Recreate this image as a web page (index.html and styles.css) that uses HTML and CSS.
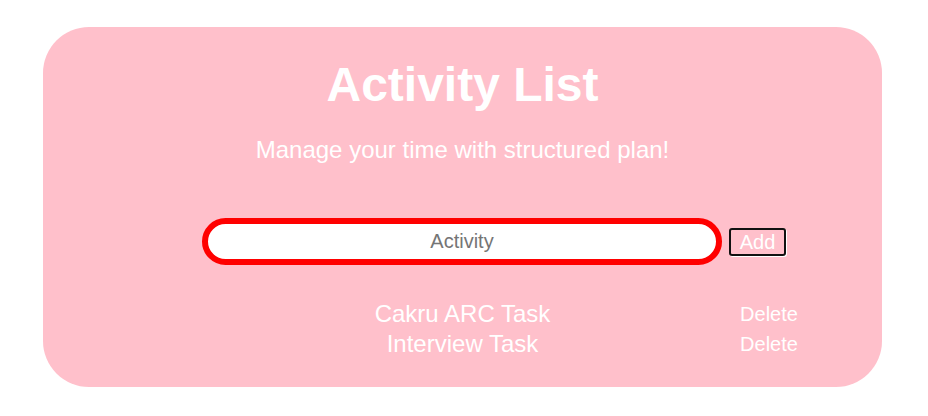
FILE: index.html
```html
<!DOCTYPE html>
<html>
<head>
<meta charset="utf-8">
<link rel="stylesheet" href="styles.css">
</head>
<body>
<main class="card">
  <h1 class="title">Activity List</h1>
  <p class="subtitle">Manage your time with structured plan!</p>
  <form class="add-form">
    <input class="activity-input" type="text" placeholder="Activity">
    <button class="add-btn" type="button">Add</button>
  </form>
  <ul class="task-list">
    <li class="task"><span class="task-name">Cakru ARC Task</span><button class="delete-btn" type="button">Delete</button></li>
    <li class="task"><span class="task-name">Interview Task</span><button class="delete-btn" type="button">Delete</button></li>
  </ul>
</main>
</body>
</html>
```
FILE: styles.css
```css
html, body {
  margin: 0;
  padding: 0;
  background: #ffffff;
}
body {
  font-family: "Liberation Sans", Arial, sans-serif;
  padding-top: 27px;
}
.card {
  width: 839px;
  height: 360px;
  margin: 0 0 0 43px;
  background: #ffc0cb;
  border-radius: 46px;
  box-sizing: border-box;
  padding-top: 30px;
  display: flex;
  flex-direction: column;
  align-items: center;
  color: #ffffff;
}
.title {
  margin: 0;
  font-size: 48px;
  font-weight: bold;
  line-height: 55px;
}
.subtitle {
  margin: 24px 0 0;
  font-size: 24px;
  line-height: 28px;
}
.add-form {
  margin-top: 54px;
  display: flex;
  align-items: center;
  gap: 7px;
  margin-left: 63px;
}
.activity-input {
  width: 520px;
  height: 47px;
  box-sizing: border-box;
  border: 6px solid #ff0000;
  border-radius: 24px;
  background: #ffffff;
  text-align: center;
  font-family: "Liberation Sans", Arial, sans-serif;
  font-size: 20px;
  color: #333;
  outline: none;
  padding: 0 8px;
}
.activity-input::placeholder {
  color: #757575;
}
.add-btn {
  width: 57px;
  height: 28px;
  box-sizing: border-box;
  border: 2px solid #111;
  border-radius: 3px;
  box-shadow: 1px 1px 0 #ffffff;
  background: #ffc0cb;
  color: #ffffff;
  font-family: "Liberation Sans", Arial, sans-serif;
  font-size: 20px;
  padding: 0;
  line-height: 22px;
}
.task-list {
  list-style: none;
  margin: 34px 0 0;
  padding: 0;
  width: 100%;
}
.task {
  display: grid;
  grid-template-columns: 1fr auto 1fr;
  align-items: center;
  height: 30px;
}
.task-name {
  grid-column: 2;
  font-size: 24px;
}
.delete-btn {
  grid-column: 3;
  justify-self: end;
  margin-right: 84px;
  width: 58px;
  background: none;
  border: none;
  padding: 0;
  color: #ffffff;
  font-family: "Liberation Sans", Arial, sans-serif;
  font-size: 20px;
}
```
